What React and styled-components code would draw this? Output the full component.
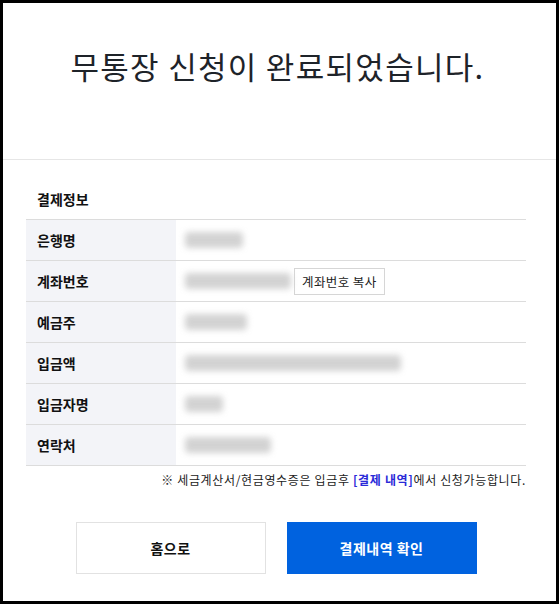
import React from "react"
import styled, { createGlobalStyle } from "styled-components"

const GlobalStyle = createGlobalStyle`
html, body {
  margin: 0;
  padding: 0;
  background: #000;
}
body {
  font-family: "Noto Sans CJK KR", "Noto Sans", sans-serif;
  color: #222;
}
`

const Frame = styled.div`
  width: 559px;
  height: 604px;
  box-sizing: border-box;
  border: 3px solid #000;
  background: #fff;
  display: flex;
  flex-direction: column;
`

const Header = styled.div`
  height: 157px;
  box-sizing: border-box;
  padding-top: 40px;
  border-bottom: 1px solid #e6e6e6;
  text-align: center;
`

const Title = styled.h1`
  margin: 0;
  font-size: 31px;
  line-height: 45px;
  font-weight: 400;
  color: #1e2329;
  letter-spacing: 1.3px;
  padding-right: 4px;
`

const Body = styled.div`
  padding: 29px 30px 0 23px;
`

const SectionTitle = styled.h2`
  margin: 0 0 10px 11px;
  font-size: 14px;
  line-height: 20px;
  font-weight: 700;
  color: #111;
`

const Table = styled.div`
  width: 500px;
  border-bottom: 1px solid #dcdcdc;
`

const Row = styled.div`
  display: grid;
  grid-template-columns: 150px 1fr;
  height: 41px;
  box-sizing: border-box;
  border-top: 1px solid #dcdcdc;
`

const Label = styled.div`
  background: #f3f4f8;
  display: flex;
  align-items: center;
  padding-left: 11px;
  font-size: 14px;
  font-weight: 700;
  color: #111;
`

const Value = styled.div`
  display: flex;
  align-items: center;
  padding-left: 9px;
  gap: 3px;
`

const Hidden = styled.span`
  display: inline-block;
  width: ${p => p.$w}px;
  height: 16px;
  border-radius: 4px;
  background: #c4c4c4;
  filter: blur(3px);
  opacity: 0.75;
`

const CopyButton = styled.button`
  height: 27px;
  padding: 0 7px;
  border: 1px solid #d6d6d6;
  background: #fff;
  font-family: inherit;
  font-size: 12.5px;
  color: #222;
  letter-spacing: 0.4px;
  cursor: pointer;
`

const Note = styled.p`
  margin: 6px 0 0;
  width: 500px;
  text-align: right;
  font-size: 12px;
  line-height: 16px;
  color: #222;
  letter-spacing: 0.65px;

  a {
    color: #2a2ad8;
    font-weight: 700;
    text-decoration: none;
  }
`

const Actions = styled.div`
  display: flex;
  justify-content: center;
  gap: 21px;
  margin-top: 34px;
  padding-right: 7px;
`

const ActionButton = styled.button`
  width: 190px;
  height: 52px;
  box-sizing: border-box;
  font-family: inherit;
  font-size: 14px;
  font-weight: 700;
  letter-spacing: 0.5px;
  cursor: pointer;
  border: 1px solid ${p => (p.$primary ? "#0062df" : "#e2e2e2")};
  background: ${p => (p.$primary ? "#0062df" : "#fff")};
  color: ${p => (p.$primary ? "#fff" : "#111")};
`

const rows = [
  { label: "은행명", w: 58 },
  { label: "계좌번호", w: 106, copy: true },
  { label: "예금주", w: 62 },
  { label: "입금액", w: 216 },
  { label: "입금자명", w: 38 },
  { label: "연락처", w: 86 },
]

function App() {
  return (
    <Frame>
      <GlobalStyle />
      <Header>
        <Title>무통장 신청이 완료되었습니다.</Title>
      </Header>
      <Body>
        <SectionTitle>결제정보</SectionTitle>
        <Table>
          {rows.map(r => (
            <Row key={r.label}>
              <Label>{r.label}</Label>
              <Value>
                <Hidden $w={r.w} />
                {r.copy && <CopyButton>계좌번호 복사</CopyButton>}
              </Value>
            </Row>
          ))}
        </Table>
        <Note>
          ※ 세금계산서/현금영수증은 입금후 <a href="#">[결제 내역]</a>에서 신청가능합니다.
        </Note>
      </Body>
      <Actions>
        <ActionButton>홈으로</ActionButton>
        <ActionButton $primary>결제내역 확인</ActionButton>
      </Actions>
    </Frame>
  )
}

export default App
